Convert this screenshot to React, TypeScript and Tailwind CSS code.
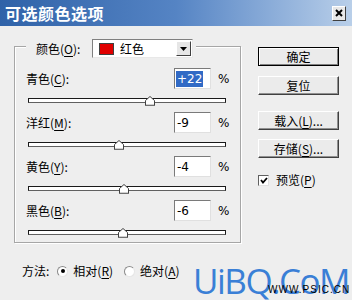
import React from "react";

const cjk = { fontFamily: '"Noto Sans CJK SC", "Liberation Sans", sans-serif' };

function U({ c }: { c: string }) {
  return <span className="underline underline-offset-[2px] decoration-[1px]">{c}</span>;
}

function Thumb({ left }: { left: number }) {
  return (
    <svg
      className="absolute top-[-3px]"
      style={{ left }}
      width="10"
      height="10"
      viewBox="0 0 10 10"
    >
      <polygon points="0.5,4.5 5,0.5 9.5,4.5 9.5,9.5 0.5,9.5" fill="#ffffff" stroke="#404040" strokeWidth="1" />
      <line x1="1" y1="9" x2="9" y2="9" stroke="#a0a0a0" />
    </svg>
  );
}

function Row({
  name,
  k,
  value,
  thumb,
  selected,
}: {
  name: string;
  k: string;
  value: string;
  thumb: number;
  selected?: boolean;
}) {
  return (
    <div className="flex flex-col">
      <div className="flex items-center h-[21px] pl-[11px] pr-[12px]">
        <div className="flex-1 text-[12px] text-black leading-none" style={cjk}>
          {name}(<U c={k} />):
        </div>
        <div className="w-[37px] h-[21px] bg-white border border-[#7a7a7a] border-r-[#e0e0e0] border-b-[#e0e0e0] flex items-center pl-[1px]">
          <span
            className={
              "text-[12px] leading-[16px] px-[1px] " +
              (selected ? "bg-[#316ac5] text-white" : "text-black")
            }
            style={{ fontFamily: '"DejaVu Sans", sans-serif' }}
          >
            {value}
          </span>
        </div>
        <div className="ml-[7px] w-[10px] text-[12px] text-black" style={{ fontFamily: '"DejaVu Sans", sans-serif' }}>
          %
        </div>
      </div>
      <div className="mt-[6px] h-[10px] flex items-center pl-[13px]">
        <div className="relative w-[198px] h-[5px] bg-white border border-[#1a1a1a] border-b-[#606060]">
          <Thumb left={thumb} />
        </div>
      </div>
    </div>
  );
}

function Btn({ children, def }: { children: React.ReactNode; def?: boolean }) {
  return (
    <div
      className={
        "w-[81px] h-[19px] flex items-center justify-center text-[12px] text-black bg-[#ebebeb] border " +
        (def
          ? "border-black shadow-[inset_1px_1px_0_#ffffff,inset_-1px_-1px_0_#808080]"
          : "border-[#ffffff] border-r-[#404040] border-b-[#404040] shadow-[inset_-1px_-1px_0_#909090]")
      }
      style={cjk}
    >
      {children}
    </div>
  );
}

export default function App() {
  return (
    <div className="w-[352px] h-[300px] bg-[#eeeeee] relative overflow-hidden flex flex-col" style={cjk}>
      {/* Title bar */}
      <div className="h-[26px] bg-gradient-to-r from-[#2f62a8] via-[#5584c4] to-[#b9cfe9] flex items-center pl-[5px] pr-[6px]">
        <div className="flex-1 text-white text-[16px] font-bold tracking-[0.5px] leading-none" style={cjk}>
          可选颜色选项
        </div>
        <div className="w-[14px] h-[15px] bg-[#e8e8e8] border border-white border-r-[#404040] border-b-[#404040] flex items-center justify-center">
          <svg width="8" height="8" viewBox="0 0 8 8">
            <path d="M1 1 L7 7 M7 1 L1 7" stroke="#000" strokeWidth="2" />
          </svg>
        </div>
      </div>

      {/* Body */}
      <div className="flex pl-[14px] pt-[20px]">
        {/* Group */}
        <div className="w-[227px] h-[197px] border border-[#a6a6a6] shadow-[inset_1px_1px_0_#ffffff,1px_1px_0_#ffffff] flex flex-col">
          <div className="-mt-[8px] ml-[11px] self-start flex items-center bg-[#eeeeee] pl-[10px] pr-[3px] h-[19px]">
            <div className="w-[56px] text-[12px] text-black leading-none" style={cjk}>
              颜色(<U c="O" />):
            </div>
            <div className="w-[101px] h-[19px] bg-white border border-[#808080] border-r-[#e8e8e8] border-b-[#e8e8e8] flex items-center pl-[6px] pr-[1px]">
              <div className="w-[15px] h-[12px] bg-[#e00000] border border-[#404040]" />
              <div className="flex-1 ml-[6px] text-[12px] text-black leading-none" style={cjk}>
                红色
              </div>
              <div className="w-[15px] h-[15px] bg-[#e6e6e6] border border-white border-r-[#404040] border-b-[#404040] flex items-center justify-center">
                <svg width="7" height="4" viewBox="0 0 7 4">
                  <polygon points="0,0 7,0 3.5,4" fill="#000" />
                </svg>
              </div>
            </div>
          </div>
          <div className="mt-[10px] flex flex-col gap-[7px]">
            <Row name="青色" k="C" value="+22" thumb={116} selected />
            <Row name="洋红" k="M" value="-9" thumb={85} />
            <Row name="黄色" k="Y" value="-4" thumb={90} />
            <Row name="黑色" k="B" value="-6" thumb={89} />
          </div>
        </div>

        {/* Right column */}
        <div className="ml-[17px] flex flex-col pt-[1px]">
          <Btn def>确定</Btn>
          <div className="h-[10px]" />
          <Btn>复位</Btn>
          <div className="h-[16px]" />
          <Btn>
            载入(<U c="L" />)...
          </Btn>
          <div className="h-[9px]" />
          <Btn>
            存储(<U c="S" />)...
          </Btn>
          <div className="mt-[16px] flex items-center">
            <div className="w-[11px] h-[11px] bg-white border border-[#606060] border-r-[#e0e0e0] border-b-[#e0e0e0] flex items-center justify-center">
              <svg width="8" height="7" viewBox="0 0 8 7">
                <path d="M1 3 L3 5.5 L7 1" stroke="#000" strokeWidth="1.8" fill="none" />
              </svg>
            </div>
            <div className="ml-[7px] text-[12px] text-black leading-none" style={cjk}>
              预览(<U c="P" />)
            </div>
          </div>
        </div>
      </div>

      {/* Method */}
      <div className="flex items-center pl-[22px] mt-[22px] text-[12px] text-black leading-none" style={cjk}>
        <span>方法:</span>
        <div className="ml-[8px] w-[11px] h-[11px] rounded-full bg-white border border-[#8a8a8a] border-r-[#e6e6e6] border-b-[#e6e6e6] flex items-center justify-center">
          <div className="w-[4px] h-[4px] rounded-full bg-black" />
        </div>
        <span className="ml-[5px]">
          相对(<U c="R" />)
        </span>
        <div className="ml-[11px] w-[11px] h-[11px] rounded-full bg-white border border-[#8a8a8a] border-r-[#e6e6e6] border-b-[#e6e6e6]" />
        <span className="ml-[5px]">
          绝对(<U c="A" />)
        </span>
      </div>

      {/* Watermark overlay */}
      <div
        className="absolute left-[193px] top-[263px] text-[#3a7fd6] text-[35px] leading-none tracking-[-1.5px]"
        style={{ fontFamily: '"Open Sans", "Liberation Sans", sans-serif' }}
      >
        UiBQ.CoM
      </div>
      <div
        className="absolute left-[268px] top-[285px] text-black text-[10px] leading-none tracking-[1px]"
        style={{ fontFamily: '"Liberation Sans", sans-serif' }}
      >
        WWW.PSIC.CN
      </div>
    </div>
  );
}
